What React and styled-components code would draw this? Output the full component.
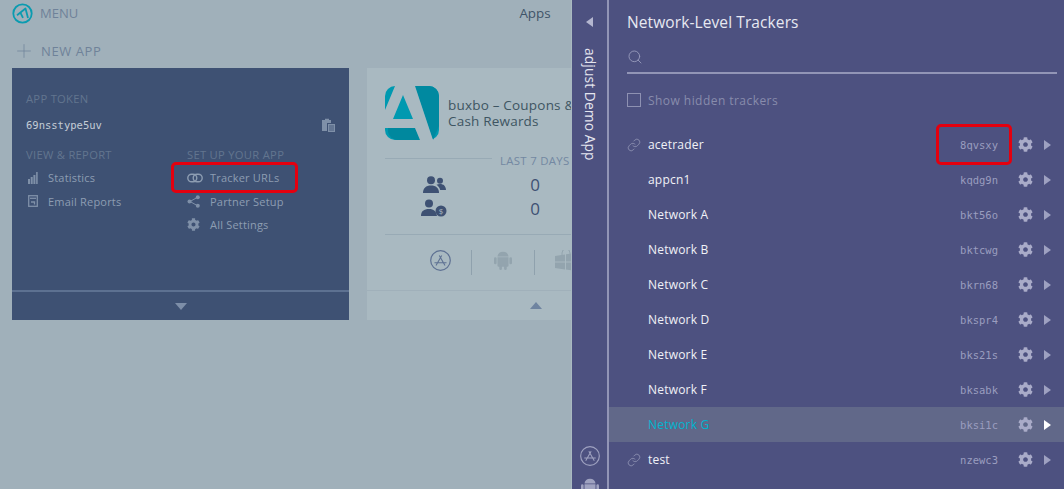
import React from 'react';
import styled, { createGlobalStyle } from 'styled-components';
import { FaCog } from 'react-icons/fa';
import { Link, Search, Plus } from 'lucide-react';

const GlobalStyle = createGlobalStyle`
  html, body { margin: 0; padding: 0; background: #a0b0ba; }
  body { font-family: "Open Sans", "Liberation Sans", sans-serif; }
`;

const Page = styled.div`
  position: relative;
  width: 1064px;
  height: 489px;
  overflow: hidden;
  background: #a0b0ba;
`;

const TopBar = styled.div`
  display: grid;
  grid-template-columns: 1fr auto 1fr;
  align-items: center;
  height: 26px;
  padding: 0 6px 0 12px;
`;

const MenuLink = styled.div`
  display: flex;
  align-items: center;
  gap: 7px;
  font-size: 13px;
  color: #6f8299;
`;

const PageTitle = styled.div`
  font-size: 13.4px;
  color: #3f5468;
`;

const NewApp = styled.div`
  display: flex;
  align-items: center;
  gap: 6px;
  height: 42px;
  padding: 8px 0 0 13px;
  box-sizing: border-box;
  font-size: 13px;
  letter-spacing: 0.6px;
  color: #6f8299;
`;

const Cards = styled.div`
  display: flex;
  gap: 18px;
  padding-left: 12px;
`;

const Card = styled.div`
  display: flex;
  flex-direction: column;
  flex: none;
  width: 337px;
  height: 252px;
  background: ${(p) => (p.$dark ? '#3e5173' : '#a9b9c1')};
`;

const CardBody = styled.div`
  flex: 1;
  min-height: 0;
  padding: ${(p) => p.$padding};
`;

const CardFooter = styled.div`
  display: flex;
  align-items: center;
  justify-content: center;
  flex: none;
  height: 30px;
  box-sizing: border-box;
  border-top: ${(p) => (p.$dark ? '2px solid #5d7191' : '1px solid #a0b0ba')};
`;

const Triangle = styled.span`
  width: 0;
  height: 0;
  border-left: 6px solid transparent;
  border-right: 6px solid transparent;
  ${(p) => (p.$up ? 'border-bottom' : 'border-top')}: 7px solid ${(p) => p.$color};
`;

const Label = styled.div`
  height: 14px;
  line-height: 14px;
  font-size: 11.2px;
  color: #62758f;
  letter-spacing: 0.3px;
`;

const TokenRow = styled.div`
  display: flex;
  align-items: center;
  justify-content: space-between;
  height: 14px;
  margin: 12px 0 16px;
  font-family: "DejaVu Sans Mono", monospace;
  font-size: 10.5px;
  color: #c3ccd6;
`;

const LinkColumns = styled.div`
  display: grid;
  grid-template-columns: 161px 1fr;
`;

const NavList = styled.div`
  margin-top: 4px;
`;

const NavItem = styled.div`
  position: relative;
  display: flex;
  align-items: center;
  height: 23.5px;
  font-size: 11px;
  letter-spacing: 0.2px;
  color: #8d9db2;
`;

const NavIcon = styled.span`
  display: flex;
  align-items: center;
  flex: none;
  box-sizing: border-box;
  width: ${(p) => (p.$wide ? '23px' : '22px')};
  padding-left: ${(p) => (p.$wide ? '0' : '2px')};
  color: #7f90a8;
`;

const Callout = styled.span`
  position: absolute;
  border: 3px solid #e3000f;
  border-radius: 5px;
  box-sizing: border-box;
  pointer-events: none;
  left: ${(p) => p.$left}px;
  top: ${(p) => p.$top}px;
  width: ${(p) => p.$width}px;
  height: ${(p) => p.$height}px;
`;

const AppHead = styled.div`
  display: flex;
  align-items: center;
  gap: 9px;
  height: 54px;
`;

const AppName = styled.div`
  width: 130px;
  flex: none;
  font-size: 13.5px;
  line-height: 16px;
  letter-spacing: 0.2px;
  white-space: nowrap;
  color: #3e5562;
`;

const PeriodRow = styled.div`
  display: flex;
  align-items: center;
  gap: 8px;
  margin: 13px 0 5px;
  height: 14px;
  font-size: 11.4px;
  letter-spacing: 0.3px;
  white-space: nowrap;
  color: #7388a2;

  &::before {
    content: '';
    width: 107px;
    height: 1px;
    margin-top: -4px;
    background: #98aab5;
  }
`;

const StatRow = styled.div`
  display: grid;
  grid-template-columns: 98px 1fr;
  align-items: center;
  height: 24px;
  width: 300px;
  font-size: 17px;
  color: #3e5173;
`;

const StatIcon = styled.span`
  display: flex;
  align-items: center;
  justify-content: center;
  color: #3e5173;
`;

const StatValue = styled.span`
  width: 104px;
  text-align: center;
`;

const StoreRow = styled.div`
  display: flex;
  align-items: center;
  width: 300px;
  height: 55px;
  margin-top: 14px;
  padding-left: 24px;
  box-sizing: border-box;
  border-top: 1px solid #98aab5;
`;

const StoreIcon = styled.span`
  display: flex;
  align-items: flex-start;
  justify-content: center;
  width: 62px;
  height: 25px;
  color: #93a4ae;

  & + & { border-left: 1px solid #8fa1ad; }
`;

const Panel = styled.aside`
  position: absolute;
  top: 0;
  right: 0;
  bottom: 0;
  display: flex;
  width: 492px;
  background: #4d5180;
  box-shadow: -1px 0 0 #a9b9c1;
`;

const Rail = styled.div`
  display: flex;
  flex-direction: column;
  align-items: center;
  flex: none;
  width: 37px;
  box-sizing: border-box;
  border-right: 2px solid #9295b6;
  overflow: hidden;
`;

const RailArrow = styled.span`
  width: 0;
  height: 0;
  margin-top: 17px;
  border-top: 5px solid transparent;
  border-bottom: 5px solid transparent;
  border-right: 7px solid #b4b6cf;
`;

const RailTitle = styled.div`
  margin-top: 21px;
  writing-mode: vertical-rl;
  font-size: 13.8px;
  line-height: 16px;
  letter-spacing: 0.1px;
  color: #e4e5ef;
`;

const RailIcons = styled.div`
  display: flex;
  flex-direction: column;
  align-items: center;
  gap: 11px;
  margin-top: auto;
  margin-bottom: -8px;
  color: #9fa2c0;
`;

const PanelMain = styled.div`
  flex: 1;
  min-width: 0;
  padding-top: 13px;
`;

const PanelTitle = styled.h2`
  margin: 0 0 0 18px;
  height: 19px;
  line-height: 19px;
  font-size: 15.5px;
  font-weight: 400;
  letter-spacing: 0.1px;
  color: #e7e8f1;
`;

const SearchBar = styled.div`
  display: flex;
  align-items: center;
  height: 30px;
  margin: 10px 7px 0 18px;
  border-bottom: 2px solid #9295b6;
  color: #9699ba;
`;

const HiddenToggle = styled.label`
  display: flex;
  align-items: center;
  gap: 7px;
  height: 16px;
  margin: 18px 0 19px 18px;
  font-size: 12px;
  letter-spacing: 0.45px;
  color: #888cac;
`;

const Checkbox = styled.span`
  width: 14px;
  height: 14px;
  box-sizing: border-box;
  border: 1px solid #8e91b2;
`;

const Row = styled.div`
  position: relative;
  display: flex;
  align-items: center;
  height: 35px;
  padding-left: 18px;
  background: ${(p) => (p.$active ? '#616889' : 'transparent')};
`;

const RowLink = styled.span`
  display: flex;
  width: 21px;
  flex: none;
  color: #8c8fb0;
`;

const RowName = styled.span`
  flex: 1;
  font-size: 12px;
  letter-spacing: 0.2px;
  color: ${(p) => (p.$active ? '#00b5cf' : '#f1f2f7')};
`;

const RowToken = styled.span`
  font-family: "DejaVu Sans Mono", monospace;
  font-size: 10.5px;
  color: #9a9dbf;
`;

const RowGear = styled.span`
  display: flex;
  margin-left: 20px;
  color: #a9abc8;
`;

const RowArrow = styled.span`
  width: 0;
  height: 0;
  margin: 0 13px 0 11px;
  border-top: 5px solid transparent;
  border-bottom: 5px solid transparent;
  border-left: 7px solid ${(p) => (p.$active ? '#ffffff' : '#9ea1c1')};
`;

const trackers = [
  { name: 'acetrader', token: '8qvsxy', linked: true, marked: true },
  { name: 'appcn1', token: 'kqdg9n' },
  { name: 'Network A', token: 'bkt56o' },
  { name: 'Network B', token: 'bktcwg' },
  { name: 'Network C', token: 'bkrn68' },
  { name: 'Network D', token: 'bkspr4' },
  { name: 'Network E', token: 'bks21s' },
  { name: 'Network F', token: 'bksabk' },
  { name: 'Network G', token: 'bksi1c', active: true },
  { name: 'test', token: 'nzewc3', linked: true },
];

function AdjustLogo() {
  return (
    <svg width="21" height="21" viewBox="0 0 21 21" fill="none" stroke="#0b9bb0" strokeWidth="1.8">
      <circle cx="10.5" cy="10.5" r="9.2" />
      <path d="M5 12.2 13.5 5.5l2.5 9.5" strokeLinejoin="round" />
      <path d="M8.5 9.8l2.5 5" />
    </svg>
  );
}

function AppStoreIcon({ size = 21, color = '#5e7193' }) {
  return (
    <svg width={size} height={size} viewBox="0 0 21 21" fill="none" stroke={color} strokeWidth="1.1">
      <circle cx="10.5" cy="10.5" r="9.8" strokeWidth="1.2" />
      <path d="M6 15.5 11.7 5.5M15 15.5 9.3 5.5M4.5 12.7h12" />
    </svg>
  );
}

function AndroidIcon({ size = 20 }) {
  return (
    <svg width={size * 0.9} height={size} viewBox="0 0 18 20" fill="currentColor">
      <path d="M3.5 6.5C3.7 3.6 6 1.8 9 1.8s5.3 1.8 5.5 4.7z" />
      <path d="M3.5 7.3h11v8.2a1.2 1.2 0 0 1-1.2 1.2H4.7a1.2 1.2 0 0 1-1.2-1.2z" />
      <rect x="0" y="7.3" width="2.6" height="7" rx="1.3" />
      <rect x="15.4" y="7.3" width="2.6" height="7" rx="1.3" />
      <rect x="5.3" y="15" width="2.6" height="5" rx="1.3" />
      <rect x="10.1" y="15" width="2.6" height="5" rx="1.3" />
    </svg>
  );
}

function WindowsStoreIcon() {
  return (
    <svg width="22" height="21" viewBox="0 0 22 21" fill="currentColor">
      <path d="M7 5V3a4 4 0 0 1 8 0v2" fill="none" stroke="currentColor" strokeWidth="1" />
      <path d="M0 6l10-1.5v7H0zM11 4.3 21 3v8.500H11zM0 12.500h10v7L0 18zM11 12.500h10V21l-10-1.400z" />
    </svg>
  );
}

function BarsIcon() {
  return (
    <svg width="10" height="12" viewBox="0 0 10 12" fill="#7f90a8">
      <rect x="0" y="7" width="2" height="5" />
      <rect x="2.7" y="5" width="2" height="7" />
      <rect x="5.4" y="3" width="2" height="9" />
      <rect x="8.1" y="0" width="1.6" height="12" />
    </svg>
  );
}

function ReportIcon() {
  return (
    <svg width="10" height="12" viewBox="0 0 10 12" fill="none" stroke="#7f90a8" strokeWidth="1.3">
      <rect x="0.7" y="0.7" width="8.6" height="10.6" />
      <path d="M2 3.3h6" />
      <path d="M3 7h3.5v2.5" />
    </svg>
  );
}

function ChainIcon() {
  return (
    <svg width="16" height="10" viewBox="0 0 16 10" fill="none" stroke="#8d9db2" strokeWidth="1.4">
      <rect x="0.8" y="1.2" width="9" height="7.6" rx="3.8" />
      <rect x="6.2" y="1.2" width="9" height="7.6" rx="3.8" />
    </svg>
  );
}

function ShareIcon() {
  return (
    <svg width="14" height="13" viewBox="0 0 14 13" fill="#7f90a8">
      <path d="M3 6.5 10.5 2.3M3 6.5l7.5 4.2" stroke="#7f90a8" fill="none" />
      <circle cx="2.5" cy="6.5" r="2" />
      <circle cx="10.8" cy="2.3" r="2" />
      <circle cx="10.8" cy="10.7" r="2" />
    </svg>
  );
}

function ClipboardIcon() {
  return (
    <svg width="13" height="14" viewBox="0 0 13 14" fill="#7f90a8">
      <path d="M0 2h3V0.8h4V2h2v3H5v8H0z" />
      <path d="M6 6h7v8H6z" />
      <path d="M7 8h5M7 10h5M7 12h5" stroke="#3e5173" strokeWidth="0.8" />
    </svg>
  );
}

function AppLogo() {
  return (
    <svg width="54" height="54" viewBox="0 0 54 54">
      <rect width="54" height="54" rx="10" fill="#0099b0" />
      <path d="M30 0h14a10 10 0 0 1 10 10v30l-6 14z" fill="#0089a0" />
      <path d="M3 42h27l5 12H12a10 10 0 0 1-9-8z" fill="#00889e" />
      <path d="M10 0h20l18 54H35l-5-12H0V24zM18 9 8 33h20z" fill="#a9b9c1" fillRule="evenodd" />
    </svg>
  );
}

function UsersIcon() {
  return (
    <svg width="23" height="17" viewBox="0 0 23 17" fill="#3e5173">
      <circle cx="8" cy="4.2" r="4" />
      <path d="M0 17c0-5 3-7.500 8-7.500s8 2.500 8 7.500z" />
      <circle cx="17" cy="4.8" r="3" />
      <path d="M13.5 8.8c1-.6 2.2-.9 3.500-.9 3.600 0 5.800 2.100 6 6h-5.800c-.6-2.200-1.900-4-3.700-5.100z" />
    </svg>
  );
}

function PayingUserIcon() {
  return (
    <svg width="26" height="18" viewBox="0 0 26 18" fill="#3e5173">
      <circle cx="8" cy="4.5" r="4" />
      <path d="M0 17c0-5 3-7 8-7s7 2 8 7z" />
      <circle cx="20" cy="12" r="5.5" />
      <text x="20" y="15" textAnchor="middle" fontSize="8" fill="#a9b9c1" fontFamily="Open Sans">$</text>
    </svg>
  );
}

export default function App() {
  return (
    <Page>
      <GlobalStyle />
      <TopBar>
        <MenuLink><AdjustLogo />MENU</MenuLink>
        <PageTitle>Apps</PageTitle>
      </TopBar>
      <NewApp><Plus size={22} strokeWidth={0.8} />NEW APP</NewApp>
      <Cards>
        <Card $dark>
          <CardBody $padding="24px 14px 0">
            <Label>APP TOKEN</Label>
            <TokenRow>69nsstype5uv<ClipboardIcon /></TokenRow>
            <LinkColumns>
              <div>
                <Label>VIEW &amp; REPORT</Label>
                <NavList>
                  <NavItem><NavIcon><BarsIcon /></NavIcon>Statistics</NavItem>
                  <NavItem><NavIcon><ReportIcon /></NavIcon>Email Reports</NavItem>
                </NavList>
              </div>
              <div>
                <Label>SET UP YOUR APP</Label>
                <NavList>
                  <NavItem>
                    <NavIcon $wide><ChainIcon /></NavIcon>Tracker URLs
                    <Callout $left={-16} $top={-4} $width={127} $height={31} />
                  </NavItem>
                  <NavItem><NavIcon $wide><ShareIcon /></NavIcon>Partner Setup</NavItem>
                  <NavItem><NavIcon $wide><FaCog size={13} /></NavIcon>All Settings</NavItem>
                </NavList>
              </div>
            </LinkColumns>
          </CardBody>
          <CardFooter $dark><Triangle $color="#7d8ea8" /></CardFooter>
        </Card>
        <Card>
          <CardBody $padding="18px 18px 0">
            <AppHead>
              <AppLogo />
              <AppName>buxbo – Coupons &amp;<br />Cash Rewards</AppName>
            </AppHead>
            <PeriodRow>LAST 7 DAYS</PeriodRow>
            <StatRow>
              <StatIcon><UsersIcon /></StatIcon>
              <StatValue>0</StatValue>
            </StatRow>
            <StatRow>
              <StatIcon><PayingUserIcon /></StatIcon>
              <StatValue>0</StatValue>
            </StatRow>
            <StoreRow>
              <StoreIcon><AppStoreIcon /></StoreIcon>
              <StoreIcon><AndroidIcon /></StoreIcon>
              <StoreIcon><WindowsStoreIcon /></StoreIcon>
            </StoreRow>
          </CardBody>
          <CardFooter><Triangle $up $color="#6f84a0" /></CardFooter>
        </Card>
      </Cards>
      <Panel>
        <Rail>
          <RailArrow />
          <RailTitle>adjust Demo App</RailTitle>
          <RailIcons>
            <AppStoreIcon size={20} color="#9fa2c0" />
            <AndroidIcon />
          </RailIcons>
        </Rail>
        <PanelMain>
          <PanelTitle>Network-Level Trackers</PanelTitle>
          <SearchBar><Search size={16} strokeWidth={1.4} /></SearchBar>
          <HiddenToggle><Checkbox />Show hidden trackers</HiddenToggle>
          {trackers.map((t) => (
            <Row key={t.name} $active={t.active}>
              <RowLink>{t.linked && <Link size={14} strokeWidth={1.5} />}</RowLink>
              <RowName $active={t.active}>{t.name}</RowName>
              <RowToken>{t.token}</RowToken>
              <RowGear><FaCog size={15} /></RowGear>
              <RowArrow $active={t.active} />
              {t.marked && <Callout $left={327} $top={-3} $width={76} $height={41} />}
            </Row>
          ))}
        </PanelMain>
      </Panel>
    </Page>
  );
}
